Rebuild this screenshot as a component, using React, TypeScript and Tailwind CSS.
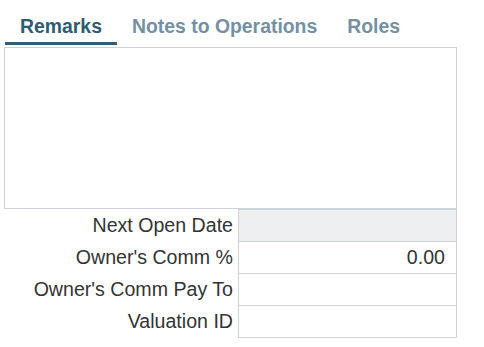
import React from 'react';

const tabs = ['Remarks', 'Notes to Operations', 'Roles'];

const fields = [
    { label: 'Next Open Date', value: '', disabled: true },
    { label: "Owner's Comm %", value: '0.00', disabled: false },
    { label: "Owner's Comm Pay To", value: '', disabled: false },
    { label: 'Valuation ID', value: '', disabled: false },
];

function App() {
    const active = 'Remarks';

    return (
        <div className="w-[484px] h-[347px] bg-white font-['Liberation_Sans',Arial,sans-serif] overflow-hidden">
            {/* Tab strip */}
            <div className="flex pl-[5px] pt-[15px]">
                {tabs.map((t) => (
                    <div
                        key={t}
                        className={
                            t === active
                                ? 'px-[15px] pb-[5px] text-[19.4px] leading-[22px] font-bold text-[#2b5c71] border-b-[3px] border-[#2f5f74]'
                                : 'px-[15px] pb-[5px] text-[19.4px] leading-[22px] font-bold text-[#7391a3] border-b-[3px] border-transparent'
                        }
                    >
                        {t}
                    </div>
                ))}
            </div>

            {/* Remarks textarea */}
            <div className="ml-[4px] mt-[2px] w-[453px] h-[162px] border border-[#cdd1d8] bg-white" />

            {/* Fields */}
            <div className="flex flex-col">
                {fields.map((f, i) => (
                    <div key={f.label} className={i === 0 ? 'flex items-stretch h-[33px]' : 'flex items-stretch h-[33px] -mt-px'}>
                        <div className="w-[233px] flex items-center justify-end text-[19.6px] text-[#333333] leading-none">
                            {f.label}
                        </div>
                        <div
                            className={
                                f.disabled
                                    ? 'ml-[5px] w-[219px] border border-[#cfd3d9] bg-[#eeeff1]'
                                    : 'ml-[5px] w-[219px] border border-[#cfd3d9] bg-white flex items-center justify-end pr-[11px] text-[19.6px] text-[#333333]'
                            }
                        >
                            {f.value}
                        </div>
                    </div>
                ))}
            </div>
        </div>
    );
}

export default App;
